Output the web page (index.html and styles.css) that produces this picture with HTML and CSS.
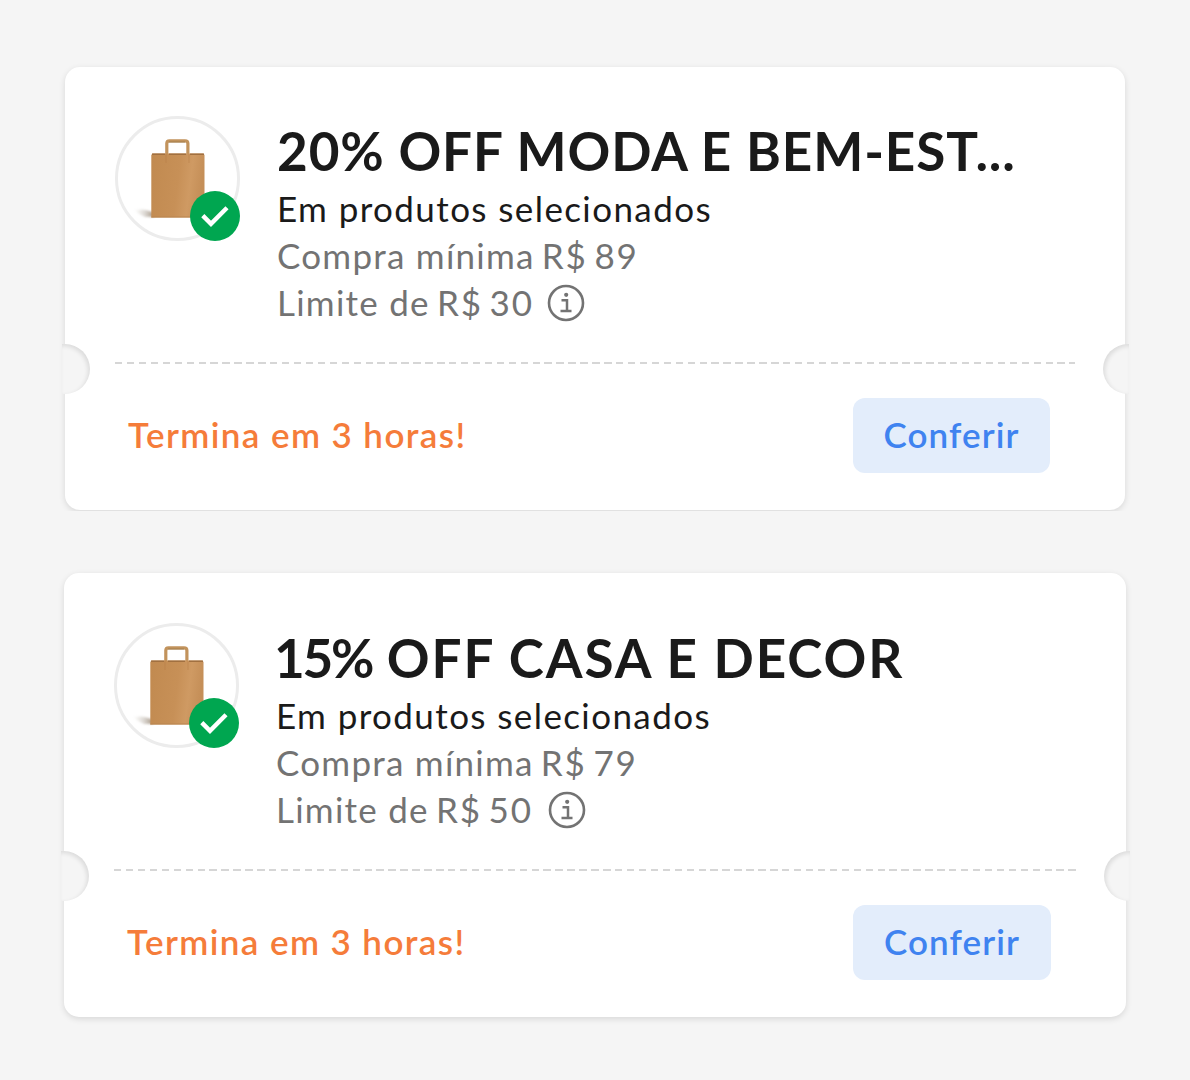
FILE: index.html
```html
<!DOCTYPE html>
<html lang="pt-BR">
<head>
<meta charset="utf-8">
<title>Cupons</title>
<link rel="stylesheet" href="styles.css">
</head>
<body>
<svg class="defs" width="0" height="0" aria-hidden="true">
  <defs>
    <linearGradient id="paper" x1="0" y1="0" x2="1" y2="0.15">
      <stop offset="0" stop-color="#c18a50"/>
      <stop offset="0.55" stop-color="#c79057"/>
      <stop offset="0.78" stop-color="#cf9a63"/>
      <stop offset="1" stop-color="#c58f58"/>
    </linearGradient>
    <linearGradient id="shade" x1="0" y1="0" x2="1" y2="0">
      <stop offset="0" stop-color="#bdb5ab" stop-opacity="0"/>
      <stop offset="0.55" stop-color="#a59a8d" stop-opacity="0.4"/>
      <stop offset="1" stop-color="#7c6449" stop-opacity="0.7"/>
    </linearGradient>
    <filter id="soften" x="-20%" y="-40%" width="140%" height="180%"><feGaussianBlur stdDeviation="1.3"/></filter>
    <symbol id="bag" viewBox="0 0 125 125">
      <path d="M19 94Q30 92 39 97V101H30Q23 98 19 94Z" fill="url(#shade)" filter="url(#soften)"/>
      <path d="M51.8 40V27.5Q51.8 24.8 54.5 24.8H70Q72.9 24.8 72.9 27.5V40" fill="none" stroke="#c2935c" stroke-width="3.2"/>
      <path d="M54 26H70" stroke="#9a7748" stroke-width="0.8"/>
      <path d="M37.5 37.5H88.3L89.5 39V101.5H36.3V39Z" fill="url(#paper)"/>
      <path d="M37 38.3H50M54 38.3H71M75 38.3H89" stroke="#a17040" stroke-width="1.4"/>
      <path d="M51 38V47M74 38V47" stroke="#b47d44" stroke-width="1" opacity="0.5"/>
      <path d="M36.3 101H89" stroke="#b98550" stroke-width="1"/>
    </symbol>
  </defs>
</svg>
<main class="coupons">
  <article class="coupon coupon--first">
    <div class="coupon__main">
      <div class="avatar">
        <svg class="avatar__bag"><use href="#bag"/></svg>
        <svg class="avatar__check" viewBox="0 0 50 50"><circle cx="25" cy="25" r="25" fill="#00a650"/><path d="M12.8 24.6 21 32.8 37 16.8" fill="none" stroke="#fff" stroke-width="4.4"/></svg>
      </div>
      <div class="details">
        <h2 class="title">20% OFF MODA E BEM-EST...</h2>
        <p class="subtitle">Em produtos selecionados</p>
        <p class="condition">Compra mínima <span class="price">R$ 89</span></p>
        <p class="condition condition--limit"><span>Limite de <span class="price">R$ 30</span></span>
          <svg class="info" viewBox="0 0 38 38" fill="none" stroke="#737373"><circle cx="19" cy="19" r="17" stroke-width="2.6"/><path d="M14.5 16.2H20V26.7M13.5 27H24.5" stroke-width="2.5"/><circle cx="19.2" cy="10.8" r="2.1" fill="#737373" stroke="none"/></svg>
        </p>
      </div>
    </div>
    <div class="divider"></div>
    <div class="coupon__footer">
      <span class="deadline">Termina em 3 horas!</span>
      <button class="action">Conferir</button>
    </div>
    <i class="notch notch--left"></i><i class="notch notch--right"></i>
  </article>
  <article class="coupon coupon--second">
    <div class="coupon__main">
      <div class="avatar">
        <svg class="avatar__bag"><use href="#bag"/></svg>
        <svg class="avatar__check" viewBox="0 0 50 50"><circle cx="25" cy="25" r="25" fill="#00a650"/><path d="M12.8 24.6 21 32.8 37 16.8" fill="none" stroke="#fff" stroke-width="4.4"/></svg>
      </div>
      <div class="details">
        <h2 class="title title--wide"><span class="percent">15%</span> OFF CASA E DECOR</h2>
        <p class="subtitle">Em produtos selecionados</p>
        <p class="condition">Compra mínima <span class="price">R$ 79</span></p>
        <p class="condition condition--limit"><span>Limite de <span class="price">R$ 50</span></span>
          <svg class="info" viewBox="0 0 38 38" fill="none" stroke="#737373"><circle cx="19" cy="19" r="17" stroke-width="2.6"/><path d="M14.5 16.2H20V26.7M13.5 27H24.5" stroke-width="2.5"/><circle cx="19.2" cy="10.8" r="2.1" fill="#737373" stroke="none"/></svg>
        </p>
      </div>
    </div>
    <div class="divider"></div>
    <div class="coupon__footer">
      <span class="deadline">Termina em 3 horas!</span>
      <button class="action">Conferir</button>
    </div>
    <i class="notch notch--left"></i><i class="notch notch--right"></i>
  </article>
</main>
</body>
</html>
```
FILE: styles.css
```css
* { box-sizing: border-box; }
body { margin: 0; background: #f5f5f5; font-family: Lato, "Open Sans", sans-serif; }
h2, p { margin: 0; white-space: nowrap; }
.defs { position: absolute; }
.coupons { height: 1080px; padding: 67px 64px 0; display: flex; flex-direction: column; gap: 63px; }
.coupon { position: relative; height: 443px; padding: 49px 50px 0; background: #fff; border-radius: 15px; box-shadow: 0 2px 6px rgba(0,0,0,.12); }
.coupon--first { margin: 0 1px; clip-path: inset(-8px -8px -1px -8px); }
.coupon--second { height: 444px; padding-top: 50px; }
.coupon__main { display: flex; gap: 37px; height: 246px; }
.avatar { position: relative; width: 125px; height: 125px; flex: none; border: 3px solid #ececec; border-radius: 50%; }
.avatar__bag { position: absolute; left: -3px; top: -3px; width: 125px; height: 125px; }
.avatar__check { position: absolute; right: -3px; bottom: -3px; width: 50px; height: 50px; }
.details { padding-top: 1px; color: #1a1a1a; }
.title { height: 68px; font-size: 53px; line-height: 68px; font-weight: 700; letter-spacing: .9px; }
.title--wide { letter-spacing: 1.9px; }
.percent { margin-left: -2px; letter-spacing: -2.3px; }
.subtitle { height: 47px; font-size: 35px; line-height: 47px; letter-spacing: 1.4px; }
.condition { height: 47px; font-size: 35px; line-height: 47px; letter-spacing: 1.25px; color: #737373; }
.price { margin-left: -3px; word-spacing: -4px; letter-spacing: 1.8px; }
.condition--limit { display: flex; align-items: center; gap: 13px; }
.coupon--second .condition--limit { gap: 15px; }
.info { width: 38px; height: 38px; }
.divider { height: 2px; background: repeating-linear-gradient(90deg, #d6d6d6 0 7.4px, transparent 7.4px 11.93px); }
.coupon__footer { display: flex; justify-content: space-between; align-items: center; margin: 34px 25px 0 13px; height: 75px; }
.deadline { padding-bottom: 3px; font-size: 35px; font-weight: 600; letter-spacing: 1.4px; color: #f57c3a; }
.action { width: 197px; height: 75px; padding: 0 0 3px; border: 0; border-radius: 12px; background: #e3edfb; color: #3f83f0; font: 600 35px Lato, sans-serif; letter-spacing: 1.1px; }
.coupon--second .action { width: 198px; }
.notch { position: absolute; top: 277px; width: 28px; height: 50px; background: #f5f5f5; }
.coupon--second .notch { top: 278px; }
.notch--left { left: -3px; border-radius: 0 25px 25px 0; box-shadow: inset -2px 2px 4px rgba(0,0,0,.1); }
.notch--right { right: -4px; width: 26px; border-radius: 25px 0 0 25px; box-shadow: inset 2px 2px 4px rgba(0,0,0,.1); }
```
